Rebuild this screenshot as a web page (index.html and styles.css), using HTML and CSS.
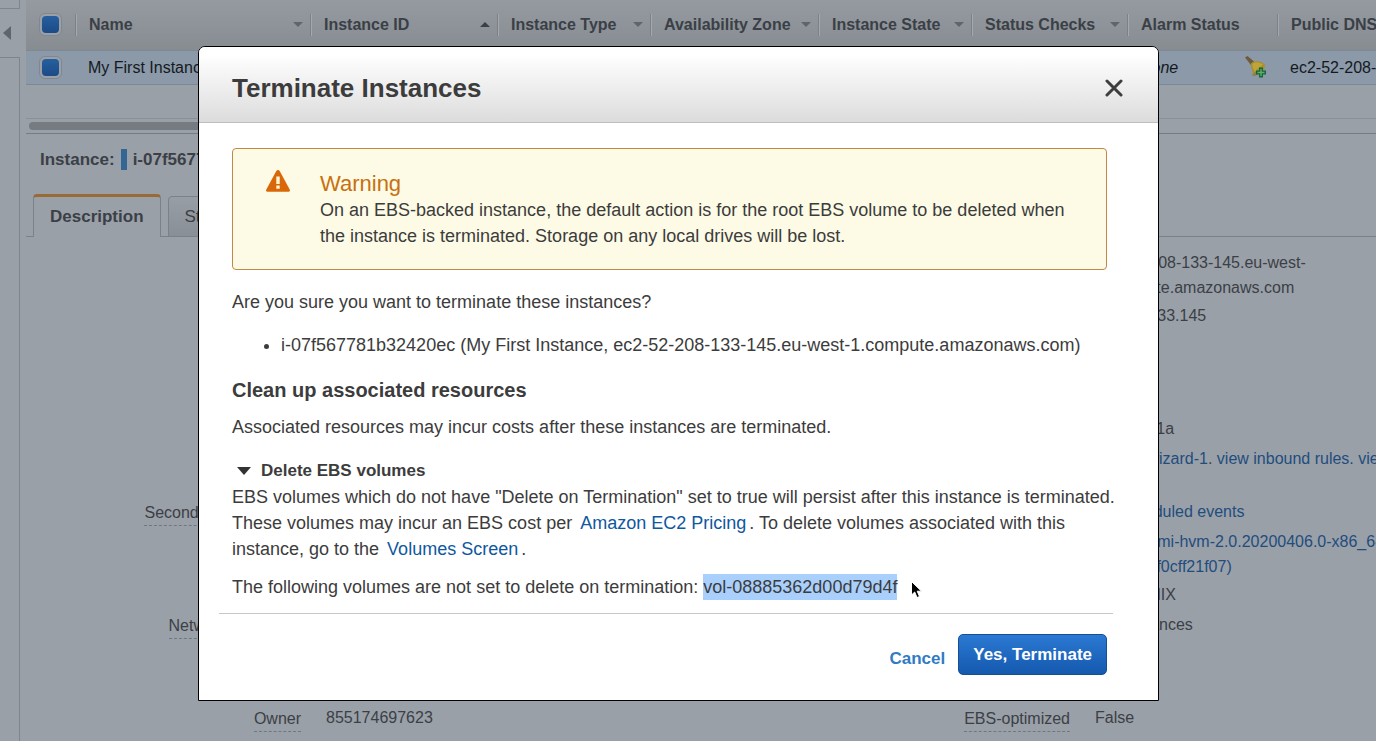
FILE: index.html
```html
<!DOCTYPE html>
<html lang="en">
<head>
<meta charset="utf-8">
<title>Terminate Instances</title>
<link rel="stylesheet" href="styles.css">
</head>
<body>
<div class="console">
  <aside class="rail">
    <div class="rail-top"></div>
    <button class="rail-toggle" type="button" aria-label="Collapse navigation">
      <svg width="8" height="14" viewBox="0 0 8 14"><path d="M8 0v14L0 7z" fill="#60656d"/></svg>
    </button>
    <div class="rail-body"></div>
  </aside>
  <main class="main">
    <table class="instances">
      <colgroup>
        <col class="c-check"><col class="c-name"><col class="c-id"><col class="c-type"><col class="c-zone"><col class="c-state"><col class="c-checks"><col class="c-alarm"><col>
      </colgroup>
      <thead>
        <tr>
          <th class="check"><input type="checkbox" checked aria-label="Select all"></th>
          <th><div class="head">Name<i class="sort"></i></div></th>
          <th><div class="head">Instance ID<i class="sort up"></i></div></th>
          <th><div class="head">Instance Type<i class="sort"></i></div></th>
          <th><div class="head">Availability Zone<i class="sort"></i></div></th>
          <th><div class="head">Instance State<i class="sort"></i></div></th>
          <th><div class="head">Status Checks<i class="sort"></i></div></th>
          <th><div class="head">Alarm Status</div></th>
          <th><div class="head">Public DNS</div></th>
        </tr>
      </thead>
      <tbody>
        <tr>
          <td class="check"><input type="checkbox" checked aria-label="Select My First Instance"></td>
          <td>My First Instance</td>
          <td></td><td></td><td></td><td></td><td></td>
          <td>
            <div class="alarm"><em>None</em>
              <svg width="22" height="22" viewBox="0 0 22 22">
                <path d="M0 1.500L2.500 0l6.500 5.500-3 3.500z" fill="#6e5a3f"/>
                <path d="M6 7.500C9 4 14 4 20 8.500L19.500 13 11 20l-3.500-.5C9 15 5 12 6 7.500z" fill="#a8902f"/>
                <path d="M7.500 8c3-3 7-2 10.500.5L12 13c-1 1-2 2.500-2 4-.5-3-3-5.500-2.500-9z" fill="#bda53c"/>
                <path d="M7 19.500c2 .6 4 .3 5-.5l-1-4z" fill="#8d7d55"/>
                <path d="M14 11.500h4v3h3v4h-3v3h-4v-3h-3v-4h3z" fill="#17653a"/>
                <path d="M15.300 13h1.400v2.800h2.800v1.400h-2.800V20h-1.400v-2.800h-2.800v-1.400h2.800z" fill="#5fae63"/>
              </svg>
            </div>
          </td>
          <td>ec2-52-208-133-145</td>
        </tr>
      </tbody>
    </table>
    <div class="table-space"></div>
    <div class="scroll-track"><div class="scroll-thumb"></div></div>
    <h1 class="instance-title">Instance: <i class="status-bar"></i>i-07f567781b32420ec</h1>
    <nav class="tabs">
      <button class="tab active" type="button">Description</button>
      <button class="tab" type="button">Status Checks</button>
    </nav>
    <section class="details">
      <div class="row"><span></span><span></span><span></span><span class="value">ec2-52-208-133-145.eu-west-<br>1.compute.amazonaws.com</span></div>
      <div class="row"><span></span><span></span><span></span><span class="value">52.208.133.145</span></div>
      <div class="row"></div>
      <div class="row double"></div>
      <div class="row"><span></span><span></span><span></span><span class="value">eu-west-1a</span></div>
      <div class="row double"><span></span><span></span><span></span><span class="value"><a href="#">launch-wizard-1</a>. <a href="#">view inbound rules.</a> <a href="#">view</a></span></div>
      <div class="row"><span class="label"><b>Secondary private IPs</b></span><span></span><span></span><span class="value"><a href="#">No scheduled events</a></span></div>
      <div class="row"><span></span><span></span><span></span><span class="value"><a href="#">amzn2-ami-hvm-2.0.20200406.0-x86_64-gp2<br>06ce3edf0cff21f07)</a></span></div>
      <div class="row"><span></span><span></span><span></span><span class="value">Linux/UNIX</span></div>
      <div class="row"><span class="label"><b>Network interfaces</b></span><span></span><span></span><span class="value">RunInstances</span></div>
      <div class="row"></div>
      <div class="row spaced"><span class="label"><b>Key pair name</b></span></div>
      <div class="row"><span class="label"><b>Owner</b></span><span class="value">855174697623</span><span class="label"><b>EBS-optimized</b></span><span class="value">False</span></div>
    </section>
  </main>
</div>

<div class="overlay">
  <div class="modal" role="dialog" aria-modal="true" aria-labelledby="modal-title">
    <header class="modal-head">
      <h2 id="modal-title">Terminate Instances</h2>
      <button class="close" type="button" aria-label="Close">
        <svg width="18" height="18" viewBox="0 0 18 18"><path d="M2 2l14 14M16 2L2 16" stroke="#3e3e3e" stroke-width="3" stroke-linecap="round"/></svg>
      </button>
    </header>
    <div class="modal-body">
      <div class="warning">
        <svg width="24" height="22" viewBox="0 0 24 22"><path d="M12 0c.8 0 1.300.4 1.700 1l10 18.500c.6 1.200.2 2.200-1 2.200H1.300c-1.200 0-1.600-1-1-2.200L10.300 1c.4-.6.900-1 1.700-1z" fill="#d96808"/><path d="M10.300 6.500h3.400v7.500h-3.400zM10.300 15.500h3.400v3.300h-3.400z" fill="#fff7d8"/></svg>
        <div>
          <h3>Warning</h3>
          <p>On an EBS-backed instance, the default action is for the root EBS volume to be deleted when the instance is terminated. Storage on any local drives will be lost.</p>
        </div>
      </div>
      <p class="question">Are you sure you want to terminate these instances?</p>
      <ul class="targets"><li>i-07f567781b32420ec (My First Instance, ec2-52-208-133-145.eu-west-1.compute.amazonaws.com)</li></ul>
      <h3 class="section-title">Clean up associated resources</h3>
      <p>Associated resources may incur costs after these instances are terminated.</p>
      <button class="expander" type="button"><i class="caret"></i>Delete EBS volumes</button>
      <p>EBS volumes which do not have "Delete on Termination" set to true will persist after this instance is terminated. These volumes may incur an EBS cost per <a href="#">Amazon EC2 Pricing</a>. To delete volumes associated with this<br>instance, go to the <a href="#">Volumes Screen</a>.</p>
      <p class="volumes">The following volumes are not set to delete on termination: <mark>vol-08885362d00d79d4f</mark></p>
    </div>
    <footer class="modal-foot">
      <button class="cancel" type="button">Cancel</button>
      <button class="confirm" type="button">Yes, Terminate</button>
    </footer>
    <svg class="pointer" width="14" height="20" viewBox="0 0 14 20"><path d="M1.500 1.500v13.500l3.200-3 2.300 5.500 2.500-1-2.300-5.300h4.300z" fill="#000" stroke="#fff" stroke-width="1"/></svg>
  </div>
</div>
</body>
</html>
```
FILE: styles.css
```css
* { box-sizing: border-box; }
body {
  margin: 0;
  height: 100vh;
  overflow: hidden;
  background: #9aa0a8;
  color: #3b3f46;
  font: 16px/25px "Liberation Sans", Arial, sans-serif;
}
h1, h2, h3, p, ul { margin: 0; padding: 0; }
button { font: inherit; color: inherit; background: none; border: 0; padding: 0; margin: 0; cursor: pointer; }
a { text-decoration: none; }
svg { display: block; flex: none; }

.console { display: flex; height: 100%; gap: 6px; overflow: hidden; }
.rail { width: 20px; flex: none; display: flex; flex-direction: column; }
.rail-top { height: 9px; border-right: 1px solid #7f858d; border-bottom: 1px solid #7f858d; }
.rail-toggle { height: 48px; padding-left: 3px; }
.rail-body { flex: 1; border-right: 1px solid #7f858d; border-top: 1px solid #7f858d; }
.main { flex: 1; min-width: 0; overflow: hidden; }

.instances { width: 100%; table-layout: fixed; border-collapse: collapse; white-space: nowrap; }
.c-check { width: 49px; }
.c-name { width: 235px; }
.c-id { width: 187px; }
.c-type { width: 153px; }
.c-zone { width: 168px; }
.c-state { width: 153px; }
.c-checks { width: 156px; }
.c-alarm { width: 150px; }
.instances thead { background: linear-gradient(#949a9f, #8f959b 40%, #868c90); }
.instances th { height: 50px; padding: 0; text-align: left; }
.head {
  display: flex;
  align-items: center;
  justify-content: space-between;
  height: 22px;
  padding: 0 7px 0 13px;
  border-left: 1px solid #7b8187;
  box-shadow: inset 1px 0 #a3a9ae;
}
.sort { border: 5px solid transparent; border-top-color: #5f656c; border-bottom: 0; }
.sort.up { border-top: 0; border-bottom: 5px solid #3b3f46; }
.instances td {
  height: 34px;
  padding: 0 0 0 13px;
  background: #8b99a8;
  border-top: 1px solid #7b8896;
  border-bottom: 1px solid #7b8896;
  color: #15191f;
  overflow: hidden;
}
.instances .check { padding: 0 0 0 13px; }
input[type="checkbox"] {
  appearance: none;
  display: grid;
  place-items: center;
  width: 23px;
  height: 23px;
  margin: 0;
  border: 1px solid #81878e;
  border-radius: 6px;
  background: #9aa0a7;
}
input[type="checkbox"]:checked::before {
  content: "";
  width: 17px;
  height: 17px;
  border-radius: 4px;
  background: linear-gradient(#265f9f, #1c4b86);
}
.alarm { display: flex; justify-content: space-between; padding-right: 10px; align-items: center; }
.table-space { height: 34px; border-bottom: 1px solid #8a9097; }
.scroll-track { height: 15px; padding: 3px; border-bottom: 1px solid #767c84; }
.scroll-thumb { width: 60%; height: 8px; border-radius: 4px; background: #767b82; }

.instance-title { display: flex; align-items: center; height: 59px; padding: 0 0 8px 14px; font-size: 17px; }
.status-bar { width: 6px; height: 21px; margin: 0 6px; background: #356592; }
.tabs { display: flex; align-items: flex-end; height: 44px; padding-left: 7px; gap: 7px; box-shadow: inset 0 -1px #7b8188; }
.tab { height: 41px; padding: 0 16px; border: 1px solid #7b8188; border-radius: 4px 4px 0 0; font-size: 17px; background: linear-gradient(#989ea5, #898f96); }
.tab.active { height: 43px; border-top: 3px solid #9a6a36; border-bottom: 0; font-weight: bold; background: #9aa0a8; }

.details { padding-top: 13px; }
.row { display: grid; grid-template-columns: 275px 1fr 250px 281px; column-gap: 25px; min-height: 30px; white-space: nowrap; }
.row.double { min-height: 53px; }
.row.spaced { min-height: 33px; }
.label { padding-top: 1px; text-align: right; }
.label b { display: inline-block; font-weight: normal; border-bottom: 1px dashed #71777f; }
.value { padding-bottom: 3px; }
.details a { color: #1f4d7d; }

.overlay { position: absolute; inset: 0; padding: 46px 217px 0 198px; color: #3c3c3c; font-size: 17px; line-height: 26px; }
.modal { position: relative; background: #fff; border: 1px solid #000; border-radius: 7px 7px 0 0; }
.modal-head {
  display: flex;
  align-items: center;
  justify-content: space-between;
  height: 76px;
  padding: 6px 35px 0 33px;
  border-bottom: 1px solid #bdbdbd;
  border-radius: 6px 6px 0 0;
  background: linear-gradient(#fff 10%, #dcdcdc);
}
.modal-head h2 { font-size: 26px; line-height: 32px; }
.modal-body { padding: 25px 40px 13px 33px; font-size: 18px; }
.modal-body a { padding: 0 3px; color: #0f589f; }
.warning { display: flex; gap: 30px; margin-right: 11px; padding: 21px 40px 20px 33px; border: 1px solid #c08a42; border-radius: 4px; background: #fdfbe6; }
.warning h3 { font-size: 22px; line-height: 27px; font-weight: normal; color: #c8700f; }
.question { margin-top: 19px; }
.targets { margin: 17px 0 19px; padding-left: 49px; white-space: nowrap; }
.section-title { margin-bottom: 11px; font-size: 20px; }
.expander { display: flex; align-items: center; gap: 10px; margin-top: 18px; padding-left: 5px; font-size: 17px; font-weight: bold; }
.caret { border: 7px solid transparent; border-top: 8px solid #333; border-bottom: 0; }
.volumes { margin-top: 12px; }
mark { display: inline-block; background: #a9d0fd; color: inherit; }
.modal-foot { display: flex; justify-content: flex-end; align-items: center; gap: 13px; margin: 0 45px 0 20px; padding: 20px 6px 25px 0; border-top: 1px solid #c6c6c6; }
.cancel { padding-top: 8px; font-weight: bold; color: #2f7cc4; }
.confirm { height: 41px; padding: 0 14px; border: 1px solid #164f92; border-radius: 5px; background: linear-gradient(#2b79d3, #1459ae); color: #fff; font-weight: bold; }
.pointer { position: absolute; left: 711px; top: 533px; }
```
